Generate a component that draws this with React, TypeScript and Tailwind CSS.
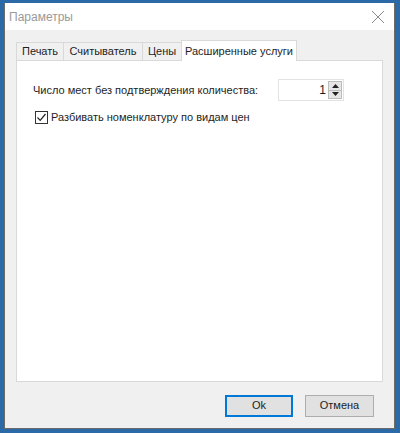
import React from "react";

const tabs = [
  { label: "Печать", w: "w-[48px]" },
  { label: "Считыватель", w: "w-[80px]" },
  { label: "Цены", w: "w-[40px]" },
];

export default function App() {
  return (
    <div className="h-[433px] w-[400px] bg-[#2b6aa6] pl-[4px] pt-[3px] font-['Liberation_Sans',Arial,sans-serif] text-[11px] text-[#1e1e1e]">
      <div className="flex h-[426px] w-[391px] flex-col border border-[#6b6b6b] border-t-0 bg-[#f0f0f0]">
        {/* title bar */}
        <div className="flex h-[27px] items-center justify-between bg-white pl-[4px] pr-[9px]">
          <span className="text-[12px] text-[#9a9a9a]">Параметры</span>
          <svg width="14" height="14" viewBox="0 0 14 14" className="text-[#8a8a8a]">
            <path d="M1 1 L13 13 M13 1 L1 13" stroke="currentColor" strokeWidth="1" />
          </svg>
        </div>

        {/* tabs */}
        <div className="flex flex-1 flex-col pl-[11px] pr-[10px] pt-[10px]">
          <div className="flex items-end">
            {tabs.map((t) => (
              <div
                key={t.label}
                className={`-mr-px flex h-[18px] ${t.w} items-center justify-center whitespace-nowrap border border-b-0 border-[#d9d9d9] bg-[#f0f0f0] leading-none`}
              >
                {t.label}
              </div>
            ))}
            <div className="relative z-10 -mb-px flex h-[21px] w-[116px] items-center justify-center whitespace-nowrap border border-b-0 border-[#d9d9d9] bg-white leading-none">
              Расширенные услуги
            </div>
          </div>
          <div className="h-[322px] w-[367px] border border-[#d9d9d9] bg-white pl-[16px] pr-[38px] pt-[18px]">
            <div className="flex items-center justify-between">
              <span className="whitespace-nowrap">Число мест без подтверждения количества:</span>
              <div className="flex h-[22px] w-[66px] items-center border border-[#e3e3e3] bg-white pr-px">
                <span className="flex-1 pr-[2px] text-right text-[12px]">1</span>
                <div className="flex h-[18px] w-[14px] flex-col border border-[#bcbcbc]">
                  <div className="flex flex-1 items-center justify-center border-b border-[#bcbcbc] bg-[#e6e6e6]">
                    <svg width="7" height="4" viewBox="0 0 7 4">
                      <path d="M0 4 L3.5 0 L7 4 Z" fill="#222" />
                    </svg>
                  </div>
                  <div className="flex flex-1 items-center justify-center bg-[#e6e6e6]">
                    <svg width="7" height="4" viewBox="0 0 7 4">
                      <path d="M0 0 L3.5 4 L7 0 Z" fill="#222" />
                    </svg>
                  </div>
                </div>
              </div>
            </div>
            <div className="mt-[8px] flex items-center gap-[3px] pl-[2px]">
              <div className="flex h-[13px] w-[13px] items-center justify-center border border-[#333] bg-white">
                <svg width="11" height="11" viewBox="0 0 11 11">
                  <path d="M1.5 5.5 L4.2 8.3 L9.5 2" fill="none" stroke="#222" strokeWidth="1.2" />
                </svg>
              </div>
              <span className="whitespace-nowrap">Разбивать номенклатуру по видам цен</span>
            </div>
          </div>
        </div>

        {/* buttons */}
        <div className="flex h-[45px] items-center justify-end gap-[12px] pr-[20px]">
          <button className="h-[22px] w-[68px] border border-[#0078d7] bg-[#e1e1e1] text-[11px] shadow-[inset_0_0_0_1px_#0078d7]">
            Ok
          </button>
          <button className="h-[22px] w-[69px] border border-[#adadad] bg-[#e1e1e1] text-[11px]">
            Отмена
          </button>
        </div>
      </div>
    </div>
  );
}
